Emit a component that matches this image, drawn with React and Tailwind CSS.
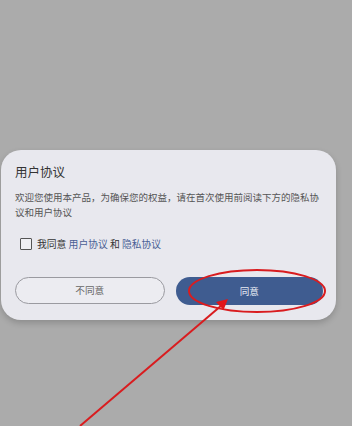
import React from "react";

const cjk = { fontFamily: '"Noto Sans CJK SC", "Noto Sans", sans-serif' };

function Annotation() {
  return (
    <svg className="absolute inset-0 pointer-events-none" width="352" height="426" viewBox="0 0 352 426">
      <ellipse cx="257" cy="291" rx="68" ry="21" fill="none" stroke="#d91c1f" strokeWidth="2" />
      <line x1="80" y1="426" x2="222" y2="305" stroke="#d91c1f" strokeWidth="2" />
      <polygon points="228,299 223.5,310 216,302" fill="#e0161b" />
    </svg>
  );
}

export default function App() {
  return (
    <div className="relative w-[352px] h-[426px] bg-[#ababab] pt-[150px] pl-[1px] overflow-hidden" style={cjk}>
      <div className="w-[335px] h-[170px] rounded-[20px] bg-[#e8e8ee] px-[14px] pt-[14px] flex flex-col shadow-[0_3px_6px_rgba(0,0,0,0.18)]">
        <h2 className="text-[12.5px] leading-[16px] text-[#333]">用户协议</h2>
        <p className="mt-[10px] text-[9.5px] leading-[14.5px] text-[#555] w-[310px]">
          欢迎您使用本产品，为确保您的权益，请在首次使用前阅读下方的隐私协议和用户协议
        </p>
        <div className="mt-[19px] ml-[5px] flex items-center h-[12px]">
          <span className="w-[12px] h-[12px] border-[1.5px] border-[#555] rounded-[1px] bg-[#f0f0f4]" />
          <span className="ml-[5px] text-[9.8px] text-[#333] whitespace-nowrap">
            我同意 <span className="text-[#4a5f95]">用户协议</span> 和 <span className="text-[#4a5f95]">隐私协议</span>
          </span>
        </div>
        <div className="mt-[27px] flex gap-[11px] w-[308px]">
          <button className="flex-1 h-[27px] rounded-full border border-[#9a9aa0] bg-[#ececf1] text-[9.6px] text-[#666]">
            不同意
          </button>
          <button className="flex-1 h-[28px] rounded-full bg-[#3f5c90] text-[9.6px] text-[#e8ecf4]">
            同意
          </button>
        </div>
      </div>
      <Annotation />
    </div>
  );
}
